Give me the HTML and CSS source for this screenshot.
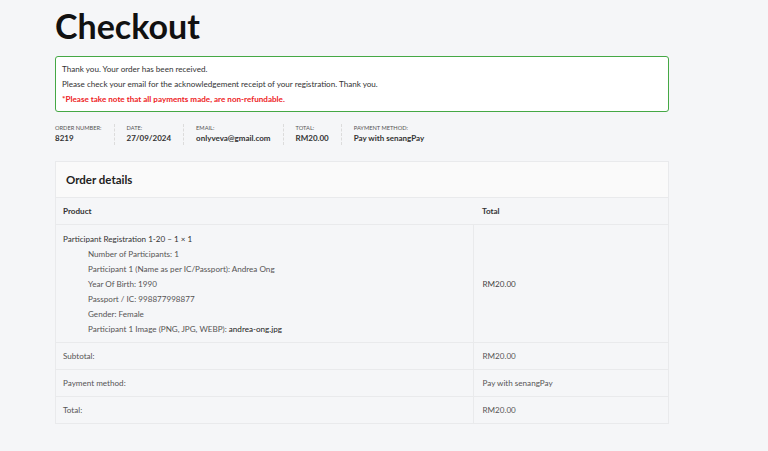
FILE: index.html
```html
<!DOCTYPE html>
<html lang="en">
<head>
<meta charset="utf-8">
<title>Checkout</title>
<link rel="stylesheet" href="styles.css">
</head>
<body>
<main class="page">
  <h1 class="title">Checkout</h1>
  <div class="notice">
    <p>Thank you. Your order has been received.</p>
    <p>Please check your email for the acknowledgement receipt of your registration. Thank you.</p>
    <p class="warn">*Please take note that all payments made, are non-refundable.</p>
  </div>
  <ul class="overview">
    <li><span class="lbl">Order number:</span><strong>8219</strong></li>
    <li><span class="lbl">Date:</span><strong>27/09/2024</strong></li>
    <li><span class="lbl">Email:</span><strong>onlyveva@gmail.com</strong></li>
    <li><span class="lbl">Total:</span><strong>RM20.00</strong></li>
    <li><span class="lbl">Payment method:</span><strong>Pay with senangPay</strong></li>
  </ul>
  <section class="card">
    <h2 class="card-title">Order details</h2>
    <table class="details">
      <thead>
        <tr><th class="c1">Product</th><th class="c2">Total</th></tr>
      </thead>
      <tbody>
        <tr class="item">
          <td class="c1">
            <div>Participant Registration 1-20 – 1 × 1</div>
            <ul class="meta">
              <li>Number of Participants: 1</li>
              <li>Participant 1 (Name as per IC/Passport): Andrea Ong</li>
              <li>Year Of Birth: 1990</li>
              <li>Passport / IC: 998877998877</li>
              <li>Gender: Female</li>
              <li>Participant 1 Image (PNG, JPG, WEBP): <span class="link">andrea-ong.jpg</span></li>
            </ul>
          </td>
          <td class="c2 mid">RM20.00</td>
        </tr>
      </tbody>
      <tfoot>
        <tr><td class="c1">Subtotal:</td><td class="c2">RM20.00</td></tr>
        <tr><td class="c1">Payment method:</td><td class="c2">Pay with senangPay</td></tr>
        <tr class="last"><td class="c1">Total:</td><td class="c2">RM20.00</td></tr>
      </tfoot>
    </table>
  </section>
</main>
</body>
</html>
```
FILE: styles.css
```css
* { box-sizing: border-box; }
html, body { margin: 0; padding: 0; }
body {
  background: #f5f6f8;
  font-family: Lato, "Open Sans", sans-serif;
  color: #333;
  height: 451px;
  overflow: hidden;
}
.page {
  width: 614px;
  margin-left: 55px;
  padding-top: 5px;
}
.title {
  margin: 0;
  font-size: 34px;
  line-height: 41px;
  font-weight: 700;
  color: #111;
}
.notice {
  margin-top: 10px;
  height: 56px;
  background: #fff;
  border: 1.5px solid #45a845;
  border-radius: 3px;
  padding: 5px 6px 0;
  font-size: 8.1px;
  line-height: 15px;
  color: #333;
}
.notice p { margin: 0; }
.notice .warn { color: #ee1c25; font-weight: 700; }
.overview {
  list-style: none;
  margin: 12px 0 0;
  padding: 0;
  display: flex;
}
.overview li {
  display: flex;
  flex-direction: column;
  padding: 0 12px;
  border-right: 1px dashed #dcdcdc;
  height: 21px;
}
.overview li:first-child { padding-left: 0; }
.overview li:last-child { border-right: 0; }
.overview .lbl {
  text-transform: uppercase;
  font-size: 5.7px;
  line-height: 8px;
  color: #555;
}
.overview strong {
  font-size: 8px;
  line-height: 12px;
  font-weight: 700;
  color: #333;
}
.card {
  margin-top: 16px;
  border: 1px solid #e9eaec;
  background: #f5f6f8;
}
.card-title {
  margin: 0;
  height: 36px;
  background: #fafafa;
  border-bottom: 1px solid #e9eaec;
  padding: 0 10px;
  font-size: 11.5px;
  line-height: 35px;
  font-weight: 700;
  color: #222;
}
.details {
  width: 100%;
  border-collapse: collapse;
  font-size: 8.1px;
  line-height: 15px;
}
.details th, .details td {
  text-align: left;
  vertical-align: top;
  padding: 6px 8px 5px 7px;
  border-bottom: 1px solid #e9eaec;
}
.details tr.last td { border-bottom: 0; }
.details .c1 { width: 417px; border-right: 1px solid #e9eaec; }
.details .c2 { padding-left: 9px; }
.details th { font-weight: 700; color: #333; }
.details thead th.c1 { border-right: 0; }
.item td.c1 { padding-top: 7px; padding-bottom: 5px; color: #333; }
.details .mid { vertical-align: middle; color: #444; }
.meta {
  list-style: none;
  margin: 0;
  padding: 0 0 0 25px;
  color: #555;
}
.meta .link { color: #222; }
.details tfoot td { color: #555; }
```
